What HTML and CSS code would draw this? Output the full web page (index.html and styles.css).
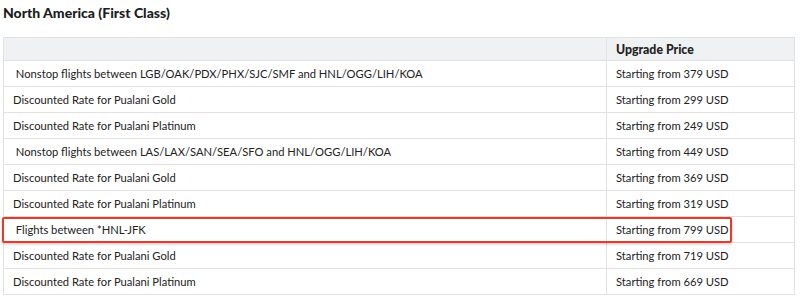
FILE: index.html
```html
<!DOCTYPE html>
<html>
<head>
<meta charset="utf-8">
<link rel="stylesheet" href="styles.css">
</head>
<body>
<h2 class="title">North America (First Class)</h2>
<table class="prices">
  <thead>
    <tr><th class="c1"></th><th class="c2">Upgrade Price</th></tr>
  </thead>
  <tbody>
    <tr><td>&nbsp;Nonstop flights between LGB/OAK/PDX/PHX/SJC/SMF and HNL/OGG/LIH/KOA</td><td>Starting from 379 USD</td></tr>
    <tr><td>Discounted Rate for Pualani Gold</td><td>Starting from 299 USD</td></tr>
    <tr><td>Discounted Rate for Pualani Platinum</td><td>Starting from 249 USD</td></tr>
    <tr><td>&nbsp;Nonstop flights between LAS/LAX/SAN/SEA/SFO and HNL/OGG/LIH/KOA</td><td>Starting from 449 USD</td></tr>
    <tr><td>Discounted Rate for Pualani Gold</td><td>Starting from 369 USD</td></tr>
    <tr><td>Discounted Rate for Pualani Platinum</td><td>Starting from 319 USD</td></tr>
    <tr class="hl"><td>&nbsp;Flights between *HNL-JFK</td><td>Starting from 799 USD</td></tr>
    <tr><td>Discounted Rate for Pualani Gold</td><td>Starting from 719 USD</td></tr>
    <tr><td>Discounted Rate for Pualani Platinum</td><td>Starting from 669 USD</td></tr>
  </tbody>
</table>
<div class="mark"></div>
</body>
</html>
```
FILE: styles.css
```css
html, body { margin: 0; padding: 0; background: #fff; }
body {
  font-family: Lato, "Open Sans", sans-serif;
  color: #222;
  position: relative;
  width: 800px;
  height: 300px;
  overflow: hidden;
}
.title {
  margin: 0;
  padding: 4px 0 0 3px;
  height: 37px;
  box-sizing: border-box;
  font-size: 14px;
  font-weight: 900;
  color: #1c1c1c;
}
.prices {
  margin-left: 3px;
  width: 792px;
  border-collapse: collapse;
  font-size: 11.2px;
}
.prices th, .prices td {
  border: 1px solid #e2e2e2;
  text-align: left;
  padding: 0 9px;
  white-space: pre;
}
.prices th {
  background: #f0f1f2;
  height: 22px;
  font-weight: 900;
  font-size: 12.3px;
}
.prices td { height: 25px; }
.prices .c1 { width: 584px; }
.mark {
  position: absolute;
  left: 2px;
  top: 217px;
  width: 730px;
  height: 26px;
  border: 2px solid #e83a2b;
  box-sizing: border-box;
  border-radius: 2px;
  box-shadow: 0 1px 3px rgba(0,0,0,0.25);
}
```
